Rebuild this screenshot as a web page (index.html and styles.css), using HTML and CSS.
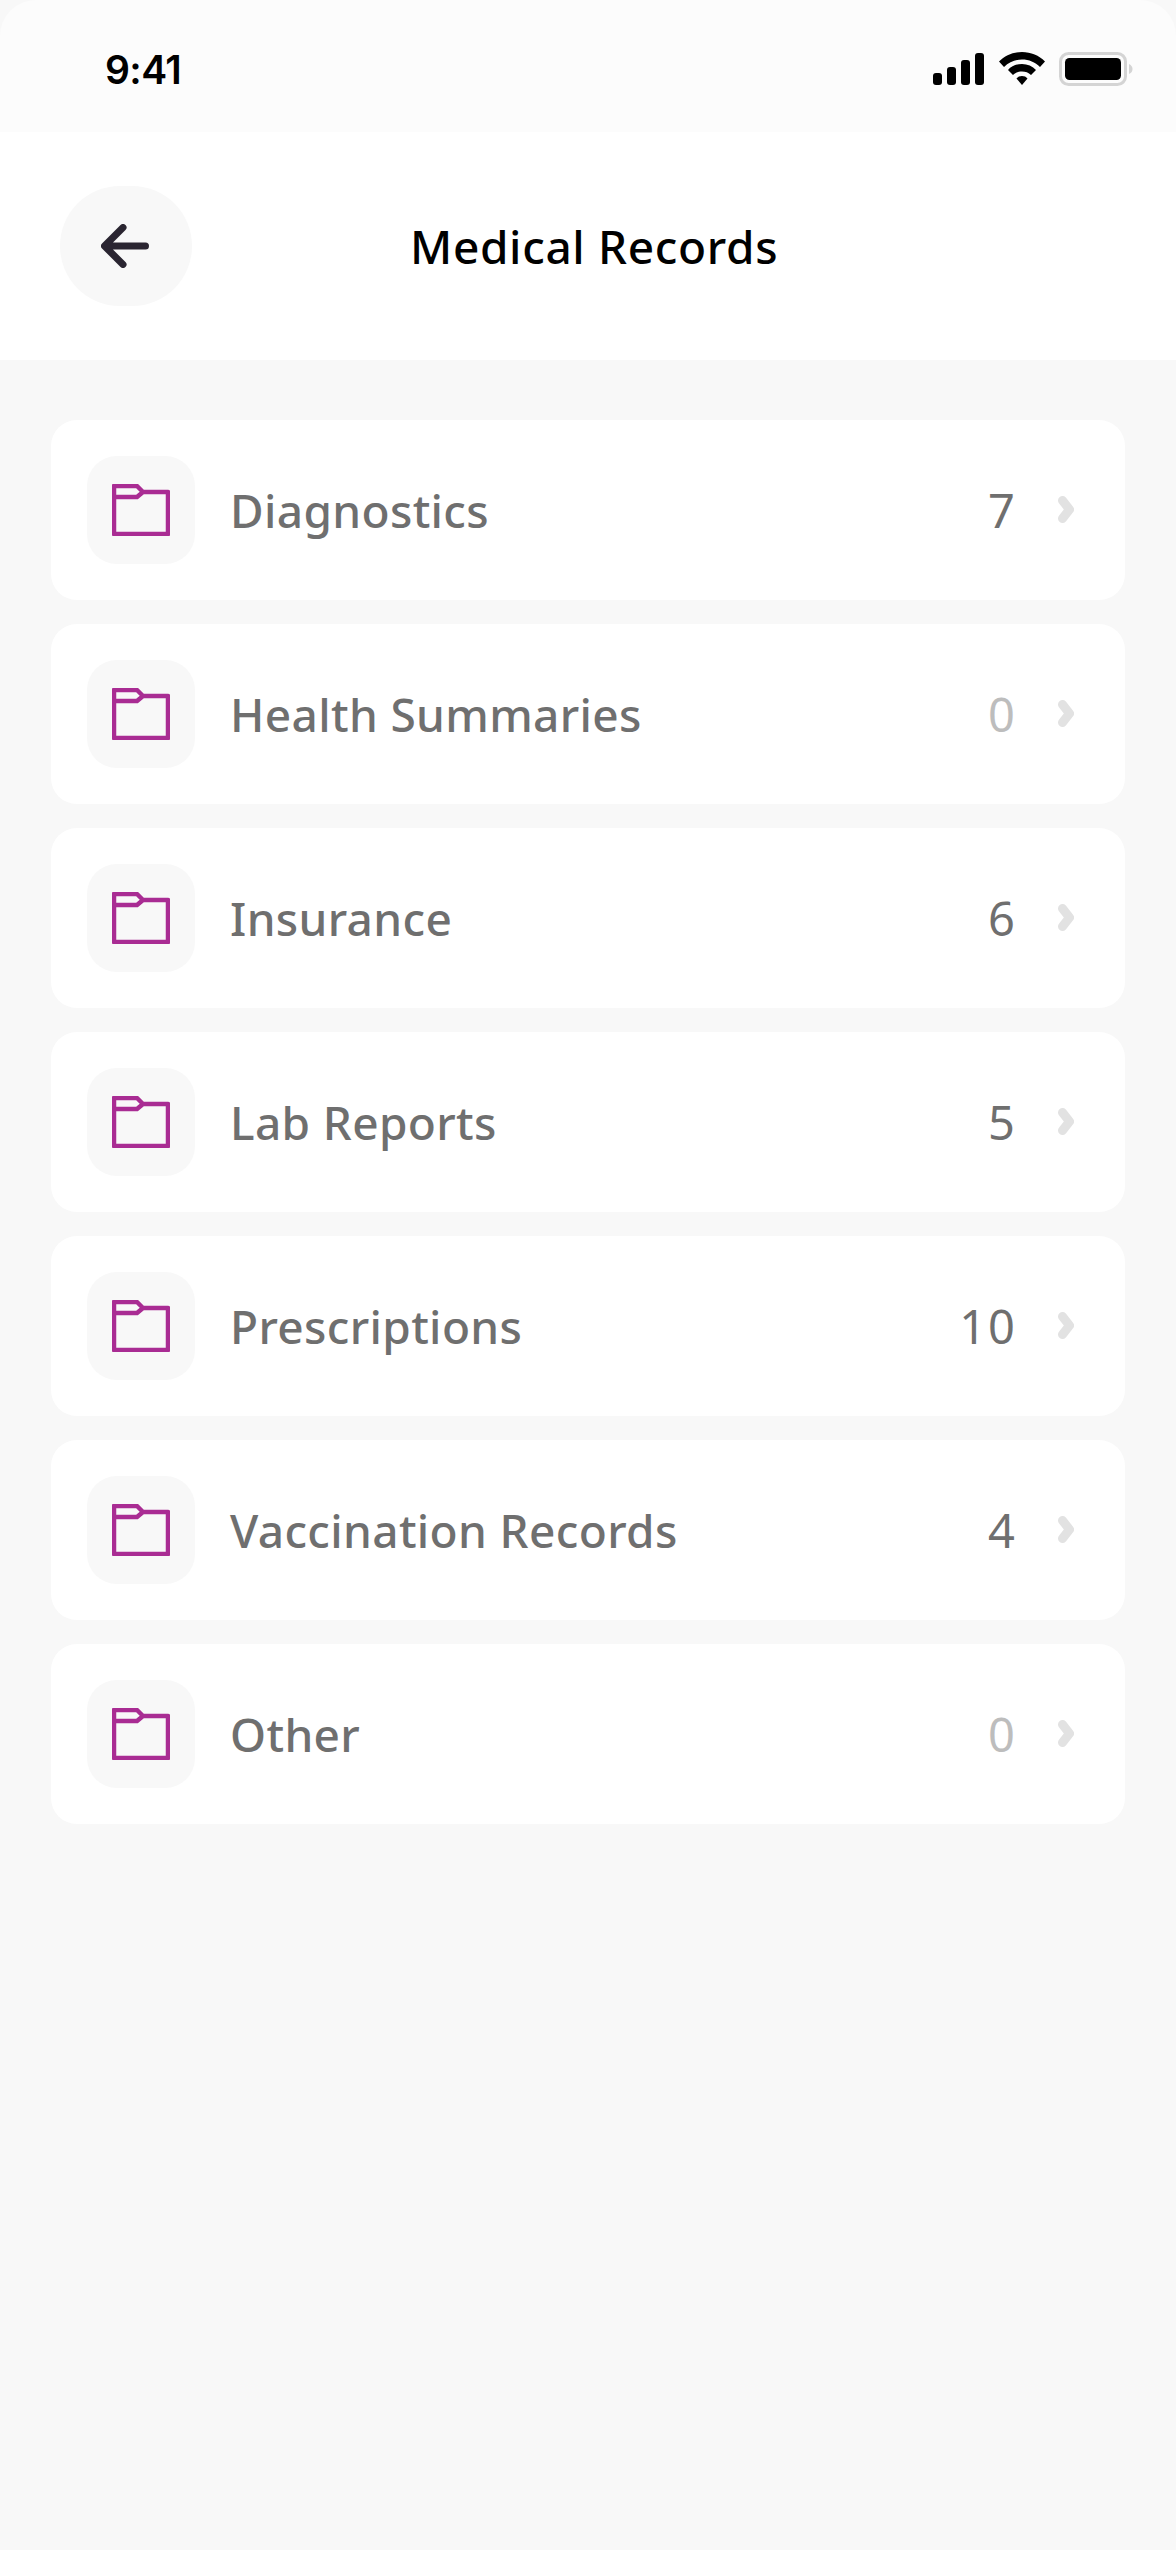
FILE: index.html
```html
<!DOCTYPE html>
<html lang="en">
<head>
  <meta charset="UTF-8" />
  <meta name="viewport" content="width=device-width, initial-scale=1.0" />
  <title>Medical Records</title>
  <link rel="stylesheet" href="styles.css">
</head>
<body>
  <svg class="defs" width="0" height="0">
    <symbol id="folder" viewBox="0 0 58 52">
      <path d="M2 2H25L31 8H56V50H2Z M2 13H25L31 8" fill="none" stroke="#a92c93" stroke-width="4.500" stroke-linejoin="round"/>
    </symbol>
    <symbol id="chevron" viewBox="0 0 16 27">
      <path d="M4.500 4.500L11.500 13.500L4.500 22.500" fill="none" stroke="#e2e2e2" stroke-width="9" stroke-linecap="round" stroke-linejoin="round"/>
    </symbol>
  </svg>

  <div class="status-bar">
    <span class="time">9:41</span>
    <div class="status-icons">
      <svg width="52" height="32" viewBox="0 0 52 32">
        <rect x="0" y="20" width="9" height="12" rx="3"/>
        <rect x="14" y="14" width="9" height="18" rx="3"/>
        <rect x="28" y="7" width="9" height="25" rx="3"/>
        <rect x="42" y="0" width="9" height="32" rx="3"/>
      </svg>
      <svg width="46" height="34" viewBox="0 0 46 34">
        <path d="M23 0C14 0 6 3.500 0 9.500L5 15C10 10 16 7.500 23 7.500S36 10 41 15L46 9.500C40 3.500 32 0 23 0Z"/>
        <path d="M23 12C17.500 12 12.500 14 9 18L14 23C16.500 20.500 19.500 19.500 23 19.500S29.500 20.500 32 23L37 18C33.500 14 28.500 12 23 12Z"/>
        <path d="M23 24C20.800 24 18.800 24.800 17.500 26.500L23 33L28.500 26.500C27.200 24.800 25.200 24 23 24Z"/>
      </svg>
      <svg width="74" height="34" viewBox="0 0 74 34">
        <rect x="1.500" y="1.500" width="65" height="31" rx="8" fill="none" stroke="#d4d4d4" stroke-width="3"/>
        <rect x="6" y="6" width="56" height="22" rx="4.500"/>
        <path d="M70 12C72.500 13 73.500 15 73.500 17S72.500 21 70 22Z" fill="#d4d4d4"/>
      </svg>
    </div>
  </div>

  <header class="top-bar">
    <button class="back-btn" type="button" aria-label="Back">
      <svg width="48" height="44" viewBox="0 0 48 44">
        <path d="M44.500 22H4M22 3.500L3.500 22L22 40.500" fill="none" stroke="#2a2531" stroke-width="7" stroke-linecap="round" stroke-linejoin="round"/>
      </svg>
    </button>
    <h1>Medical Records</h1>
  </header>

  <ul class="records">
    <li class="record">
      <span class="tile"><svg width="58" height="52"><use href="#folder"/></svg></span>
      <span class="name">Diagnostics</span>
      <span class="count">7</span>
      <svg class="chev" width="16" height="27"><use href="#chevron"/></svg>
    </li>
    <li class="record">
      <span class="tile"><svg width="58" height="52"><use href="#folder"/></svg></span>
      <span class="name">Health Summaries</span>
      <span class="count empty">0</span>
      <svg class="chev" width="16" height="27"><use href="#chevron"/></svg>
    </li>
    <li class="record">
      <span class="tile"><svg width="58" height="52"><use href="#folder"/></svg></span>
      <span class="name">Insurance</span>
      <span class="count">6</span>
      <svg class="chev" width="16" height="27"><use href="#chevron"/></svg>
    </li>
    <li class="record">
      <span class="tile"><svg width="58" height="52"><use href="#folder"/></svg></span>
      <span class="name">Lab Reports</span>
      <span class="count">5</span>
      <svg class="chev" width="16" height="27"><use href="#chevron"/></svg>
    </li>
    <li class="record">
      <span class="tile"><svg width="58" height="52"><use href="#folder"/></svg></span>
      <span class="name">Prescriptions</span>
      <span class="count">10</span>
      <svg class="chev" width="16" height="27"><use href="#chevron"/></svg>
    </li>
    <li class="record">
      <span class="tile"><svg width="58" height="52"><use href="#folder"/></svg></span>
      <span class="name">Vaccination Records</span>
      <span class="count">4</span>
      <svg class="chev" width="16" height="27"><use href="#chevron"/></svg>
    </li>
    <li class="record">
      <span class="tile"><svg width="58" height="52"><use href="#folder"/></svg></span>
      <span class="name">Other</span>
      <span class="count empty">0</span>
      <svg class="chev" width="16" height="27"><use href="#chevron"/></svg>
    </li>
  </ul>
</body>
</html>
```

FILE: styles.css
```css
* {
  box-sizing: border-box;
  margin: 0;
  padding: 0;
}

body {
  background: #f8f8f8;
  font-family: 'Noto Sans', sans-serif;
  min-height: 2550px;
}

.defs {
  display: block;
  height: 0;
}

.status-bar {
  height: 132px;
  background: #fcfcfc;
  border-radius: 36px 36px 0 0;
  display: flex;
  justify-content: space-between;
  align-items: flex-start;
  padding: 46px 43px 0 105px;
}

.time {
  font-family: 'Inter', sans-serif;
  font-size: 39px;
  line-height: 48px;
  font-weight: 600;
  letter-spacing: -0.6px;
  color: #000;
}

.status-icons {
  display: flex;
  align-items: center;
  gap: 14px;
  padding-top: 6px;
}

.top-bar {
  height: 228px;
  background: #fff;
  display: flex;
  align-items: center;
  padding-left: 60px;
}

.back-btn {
  width: 132px;
  height: 120px;
  border: none;
  border-radius: 60px;
  background: #f8f8f8;
  display: flex;
  align-items: center;
  justify-content: center;
  padding-right: 2px;
}

h1 {
  font-size: 46px;
  line-height: 60px;
  font-weight: 500;
  letter-spacing: 0.65px;
  color: #000;
  margin-left: 218px;
}

.records {
  list-style: none;
  display: flex;
  flex-direction: column;
  gap: 24px;
  padding: 60px 51px 0;
}

.record {
  height: 180px;
  background: #fff;
  border-radius: 26px;
  display: flex;
  align-items: center;
  padding: 0 51px 0 36px;
}

.tile {
  width: 108px;
  height: 108px;
  background: #f8f8f8;
  border-radius: 30px;
  display: flex;
  align-items: center;
  justify-content: center;
  flex-shrink: 0;
}

.name {
  flex: 1;
  margin-left: 35px;
  font-size: 46px;
  font-weight: 500;
  letter-spacing: 0.35px;
  color: #6f6f6f;
}

.count {
  font-size: 47px;
  letter-spacing: 2px;
  color: #6f6f6f;
}

.count.empty {
  color: #bdbdbd;
}

.chev {
  margin-left: 41px;
  margin-top: -2px;
}
```
